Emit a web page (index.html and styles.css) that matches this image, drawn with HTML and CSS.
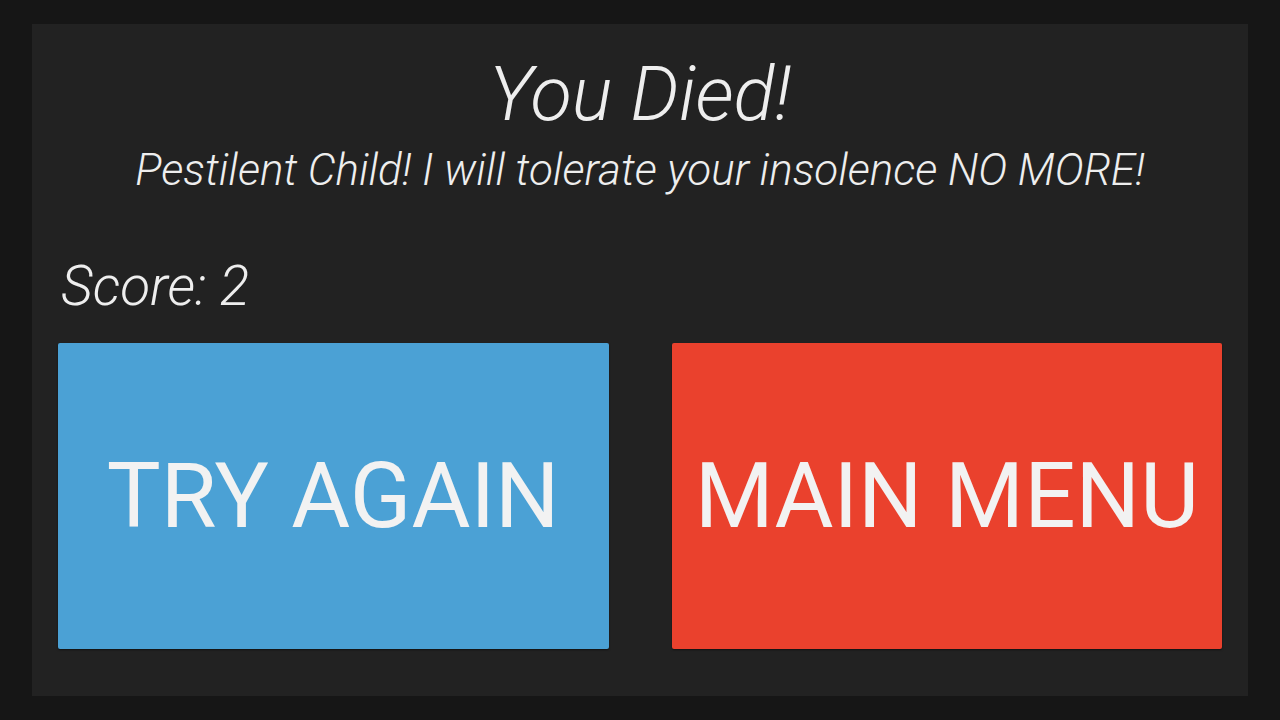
FILE: index.html
```html
<!DOCTYPE html>
<html>
<head>
<meta charset="utf-8">
<link rel="stylesheet" href="styles.css">
</head>
<body>
<div class="panel">
  <h1 class="title">You Died!</h1>
  <p class="subtitle">Pestilent Child! I will tolerate your insolence NO MORE!</p>
  <div class="score">Score: 2</div>
  <div class="buttons">
    <div class="btn btn-blue">TRY AGAIN</div>
    <div class="btn btn-red">MAIN MENU</div>
  </div>
</div>
</body>
</html>
```
FILE: styles.css
```css
html, body {
  margin: 0;
  padding: 0;
  background: #161616;
  width: 1280px;
  height: 720px;
  overflow: hidden;
}
body {
  padding: 24px 32px;
  box-sizing: border-box;
  font-family: Roboto, "Liberation Sans", sans-serif;
  color: #eeeeee;
}
.panel {
  background: #222222;
  height: 672px;
  box-sizing: border-box;
  padding: 0 26px;
  display: flex;
  flex-direction: column;
}
.title {
  margin: 0;
  margin-top: 26px;
  text-align: center;
  font-style: italic;
  font-weight: 300;
  font-size: 76px;
  line-height: 88px;
}
.subtitle {
  margin: 0;
  margin-top: 6px;
  text-align: center;
  font-style: italic;
  font-weight: 300;
  font-size: 44px;
  line-height: 52px;
}
.score {
  margin-top: 58px;
  padding-left: 3px;
  font-style: italic;
  font-weight: 300;
  font-size: 55px;
  line-height: 64px;
}
.buttons {
  margin-top: 25px;
  display: flex;
  gap: 63px;
}
.btn {
  flex: 1;
  height: 306px;
  border-radius: 2px;
  display: flex;
  align-items: center;
  justify-content: center;
  font-size: 90.5px;
  font-weight: 400;
  color: #f2f2f2;
  box-shadow: 0 1px 2px rgba(0,0,0,0.5);
}
.btn-blue { background: #4ba1d5; }
.btn-red { background: #ea412d; }
```
